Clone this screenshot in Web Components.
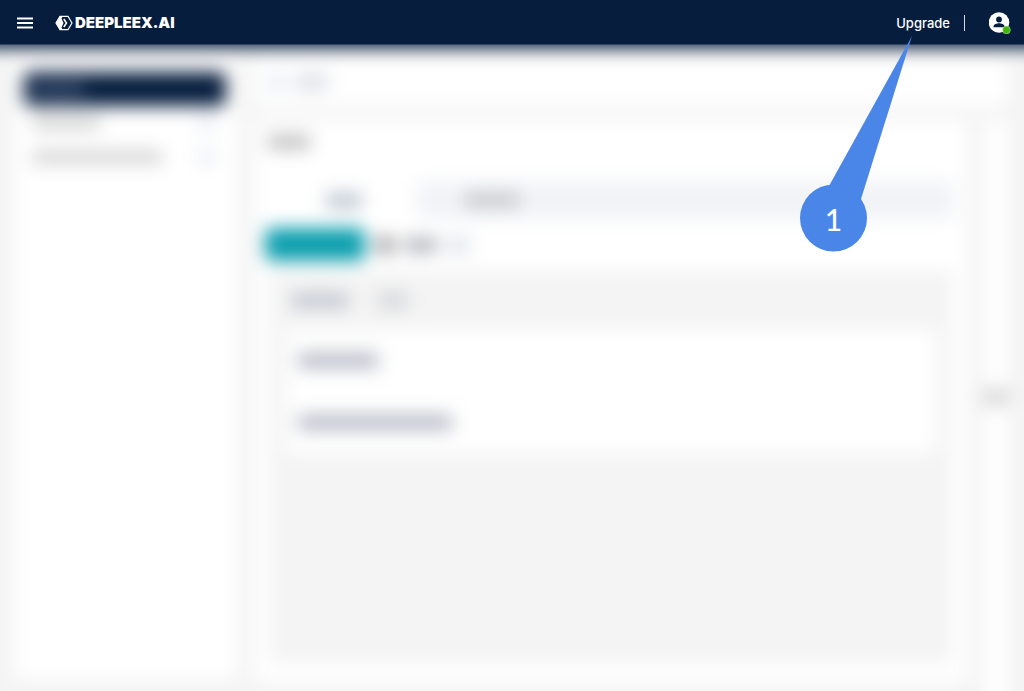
<!DOCTYPE html>
<html lang="en">
<head>
<meta charset="utf-8">
<meta name="viewport" content="width=device-width, initial-scale=1">
<title>Deepleex.AI</title>
<style>
    body {
        margin: 0;
        min-height: 100vh;
        overflow: hidden;
        background: #f4f4f4;
        font-family: Inter, "Liberation Sans", sans-serif;
    }
</style>
</head>
<body>
<guide-page>
    <app-header slot="header">
        <app-logo slot="brand">DEEPLEEX.AI</app-logo>
        <a slot="actions" href="#upgrade">Upgrade</a>
    </app-header>
    <work-space></work-space>
    <step-callout slot="callout">1</step-callout>
</guide-page>

<script>
class GuidePage extends HTMLElement {
    constructor() {
        super();
        this.attachShadow({mode: 'open'});
        this.shadowRoot.innerHTML = `
            <style>
                :host {
                    display: flex;
                    flex-direction: column;
                    position: relative;
                    height: 100vh;
                    overflow: hidden;
                }
                main {
                    flex: 1;
                    display: flex;
                    min-height: 0;
                }
            </style>
            <slot name="header"></slot>
            <main><slot></slot></main>
            <slot name="callout"></slot>
        `
    }
}

class AppHeader extends HTMLElement {
    constructor() {
        super();
        this.attachShadow({mode: 'open'});
        this.shadowRoot.innerHTML = `
            <style>
                :host {
                    display: block;
                    position: relative;
                    z-index: 1;
                    color: #fff;
                    background: #061d3d;
                }
                header {
                    display: flex;
                    align-items: center;
                    height: 45px;
                    padding: 2px 13px 0 17px;
                    border-bottom: 1px solid #34465f;
                    box-sizing: border-box;
                }
                button {
                    display: flex;
                    padding: 0;
                    border: 0;
                    background: none;
                    color: inherit;
                }
                .brand {
                    display: flex;
                    margin-left: 22px;
                }
                nav {
                    display: flex;
                    align-items: center;
                    margin-left: auto;
                }
                ::slotted(a) {
                    color: inherit;
                    font-size: 13px;
                    line-height: 20px;
                    font-weight: 500;
                    text-decoration: none;
                }
                .divider {
                    width: 1px;
                    height: 16px;
                    margin: 0 24px 0 14px;
                    background: #d5dae0;
                }
            </style>
            <header>
                <button type="button" aria-label="Menu">
                    <svg width="16" height="12" viewBox="0 0 16 12">
                        <path d="M0 1.500h16M0 6h16M0 10.500h16" stroke="currentColor" stroke-width="1.900"/>
                    </svg>
                </button>
                <div class="brand"><slot name="brand"></slot></div>
                <nav>
                    <slot name="actions"></slot>
                    <span class="divider"></span>
                    <button type="button" aria-label="Account">
                        <svg width="22" height="22" viewBox="0 0 22 22">
                            <circle cx="10" cy="10.500" r="10.300" fill="#fff"/>
                            <circle cx="10" cy="7.500" r="2.900" fill="#061d3d"/>
                            <path d="M4.500 15.300v-.7c0-2.400 3.400-3.300 5.500-3.300s5.500.9 5.500 3.300v.7z" fill="#061d3d"/>
                            <circle cx="17.500" cy="18" r="3.900" fill="#43b80b" stroke="#d9efce" stroke-width=".4"/>
                        </svg>
                    </button>
                </nav>
            </header>
        `
    }
}

class AppLogo extends HTMLElement {
    constructor() {
        super();
        this.attachShadow({mode: 'open'});
        this.shadowRoot.innerHTML = `
            <style>
                :host {
                    display: flex;
                    align-items: center;
                    gap: 2px;
                    font-size: 15px;
                    line-height: 20px;
                    font-weight: 900;
                }
            </style>
            <svg width="18" height="16" viewBox="0 0 18 16" fill="none">
                <path d="M5 1h3L6.500 3.500 8.500 8l-2 4.500L8 15H5L1 8z" fill="#fff"/>
                <path d="M5 1.300h8L17 8l-4 6.700H5L1 8z" stroke="#fff" stroke-width="1.200"/>
                <path d="M8.800 4l2.700 4-2.700 4" stroke="#fff" stroke-width="1.500"/>
            </svg>
            <slot></slot>
        `
    }
}

// a stand-in for a label that is out of focus
class BlurText extends HTMLElement {
    constructor() {
        super();
        this.attachShadow({mode: 'open'});
        this.shadowRoot.innerHTML = `
            <style>
                :host {
                    display: block;
                    flex: none;
                    width: var(--w, 60px);
                    height: var(--h, 12px);
                    background: var(--tone, #cfcfcf);
                }
            </style>
        `
    }
}

class WorkSpace extends HTMLElement {
    constructor() {
        super();
        this.attachShadow({mode: 'open'});
        this.shadowRoot.innerHTML = `
            <style>
                :host {
                    display: flex;
                    flex: 1;
                    min-width: 0;
                    margin: -45px -32px -32px;
                }
                .view {
                    flex: 1;
                    display: flex;
                    flex-direction: column;
                    min-width: 0;
                    background: #f4f4f4;
                    filter: blur(9px);
                }
                .bar {
                    flex: none;
                    height: 48px;
                    background: #061d3d;
                }
                .columns {
                    flex: 1;
                    display: flex;
                    gap: 16px;
                    min-height: 0;
                    padding: 10px 48px 0 46px;
                }
                aside {
                    width: 224px;
                    box-sizing: border-box;
                    margin-bottom: 44px;
                    padding: 14px 10px;
                    background: #fff;
                }
                .row {
                    display: flex;
                    align-items: center;
                    justify-content: space-between;
                    height: 34px;
                    padding: 0 12px 0 8px;
                }
                .row.active {
                    margin-right: 2px;
                    border-radius: 6px;
                    background: #061d3d;
                }
                .content {
                    flex: 1;
                    display: flex;
                    flex-direction: column;
                    gap: 14px;
                    min-width: 0;
                }
                .crumbs {
                    display: flex;
                    align-items: center;
                    gap: 10px;
                    height: 48px;
                    padding: 0 14px;
                    background: #fff;
                }
                .split {
                    flex: 1;
                    display: flex;
                    gap: 16px;
                    min-height: 0;
                }
                .card {
                    flex: 1;
                    display: flex;
                    flex-direction: column;
                    margin-bottom: 40px;
                    background: #fff;
                }
                .title {
                    padding: 15px 14px 32px;
                }
                .tabs {
                    display: flex;
                    height: 38px;
                    margin: 0 14px 0 16px;
                    background: #f1f3f7;
                }
                .tab {
                    display: flex;
                    align-items: center;
                    justify-content: center;
                    width: 148px;
                }
                .tab.active {
                    background: #fff;
                }
                .tools {
                    display: flex;
                    align-items: center;
                    gap: 10px;
                    padding: 9px 11px;
                }
                .primary {
                    width: 100px;
                    height: 33px;
                    border-radius: 6px;
                    background: #0c9fae;
                }
                .board {
                    flex: 1;
                    margin: 0 16px 20px;
                    padding: 0 16px;
                    background: #f4f4f4;
                }
                .filters {
                    display: flex;
                    align-items: center;
                    gap: 30px;
                    height: 60px;
                    padding: 0 6px;
                }
                .list {
                    background: #fff;
                }
                .item {
                    display: flex;
                    align-items: center;
                    height: 61px;
                    padding: 0 12px;
                    border-bottom: 1px solid #f5f5f5;
                }
                .rail {
                    display: flex;
                    align-items: center;
                    width: 24px;
                    padding-bottom: 50px;
                    background: #fff;
                }
            </style>
            <div class="view" aria-hidden="true">
                <div class="bar"></div>
                <div class="columns">
                    <aside>
                        <div class="row active"><blur-text style="--w: 52px; --tone: #3c4f70"></blur-text></div>
                        <div class="row">
                            <blur-text style="--w: 68px"></blur-text>
                            <blur-text style="--w: 18px; --h: 16px; --tone: #eceff5"></blur-text>
                        </div>
                        <div class="row">
                            <blur-text style="--w: 130px"></blur-text>
                            <blur-text style="--w: 18px; --h: 16px; --tone: #eceff5"></blur-text>
                        </div>
                    </aside>
                    <div class="content">
                        <div class="crumbs">
                            <blur-text style="--w: 18px; --h: 16px; --tone: #e5ebf3"></blur-text>
                            <blur-text style="--w: 32px; --h: 16px; --tone: #dcdfe6"></blur-text>
                        </div>
                        <div class="split">
                            <div class="card">
                                <div class="title"><blur-text style="--w: 42px; --h: 14px; --tone: #bdbdbd"></blur-text></div>
                                <div class="tabs">
                                    <div class="tab active"><blur-text style="--w: 36px; --h: 15px; --tone: #bcc5d1"></blur-text></div>
                                    <div class="tab"><blur-text style="--w: 56px; --h: 14px; --tone: #c6c7cc"></blur-text></div>
                                </div>
                                <div class="tools">
                                    <div class="primary"></div>
                                    <blur-text style="--w: 20px; --h: 16px; --tone: #a2a2a4"></blur-text>
                                    <blur-text style="--w: 32px; --h: 14px; --tone: #acafb7"></blur-text>
                                    <blur-text style="--w: 22px; --h: 16px; --tone: #dfe2e8"></blur-text>
                                </div>
                                <div class="board">
                                    <div class="filters">
                                        <blur-text style="--w: 56px; --h: 15px; --tone: #c0c5cf"></blur-text>
                                        <blur-text style="--w: 30px; --h: 15px; --tone: #d2d4d9"></blur-text>
                                    </div>
                                    <div class="list">
                                        <div class="item"><blur-text style="--w: 80px; --h: 15px; --tone: #b4b9c4"></blur-text></div>
                                        <div class="item"><blur-text style="--w: 154px; --h: 15px; --tone: #b4b9c4"></blur-text></div>
                                    </div>
                                </div>
                            </div>
                            <div class="rail"><blur-text style="--w: 24px; --h: 18px; --tone: #d8d8d8"></blur-text></div>
                        </div>
                    </div>
                </div>
            </div>
        `
    }
}

class StepCallout extends HTMLElement {
    constructor() {
        super();
        this.attachShadow({mode: 'open'});
        this.shadowRoot.innerHTML = `
            <style>
                :host {
                    position: absolute;
                    z-index: 2;
                    top: 36px;
                    right: 112px;
                    width: 112px;
                    height: 216px;
                    color: #fff;
                }
                svg {
                    display: block;
                }
                .number {
                    position: absolute;
                    left: 0;
                    bottom: 0;
                    width: 67px;
                    font: 500 30px/66px Lato, "Open Sans", sans-serif;
                    text-align: center;
                }
            </style>
            <svg width="112" height="216" viewBox="0 0 112 216" fill="#4a86e8">
                <path d="M112 0L29 150l20 28 12-15z"/>
                <circle cx="33.500" cy="182" r="33.500"/>
            </svg>
            <span class="number"><slot></slot></span>
        `
    }
}

window.customElements.define('guide-page', GuidePage);
window.customElements.define('app-header', AppHeader);
window.customElements.define('app-logo', AppLogo);
window.customElements.define('blur-text', BlurText);
window.customElements.define('work-space', WorkSpace);
window.customElements.define('step-callout', StepCallout);
</script>
</body>
</html>
